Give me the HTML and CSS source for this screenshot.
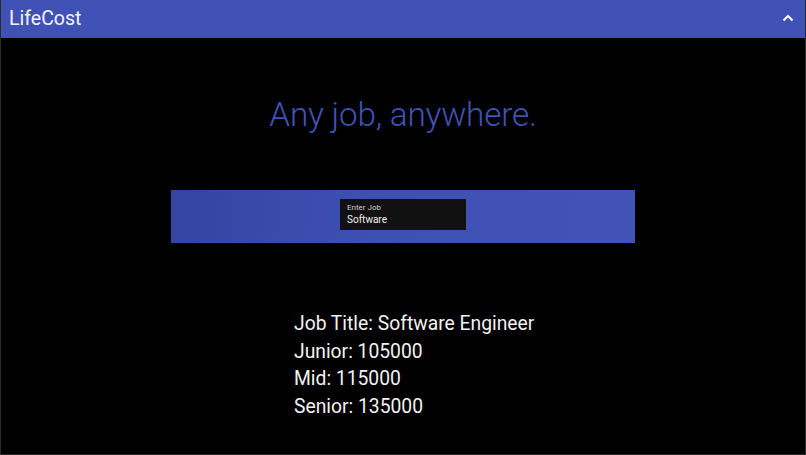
FILE: index.html
```html
<!DOCTYPE html>
<html>
<head>
<meta charset="utf-8">
<link rel="stylesheet" href="styles.css">
</head>
<body>
<div class="app">
  <header class="topbar">
    <span class="brand">LifeCost</span>
    <svg class="chev" width="12" height="8" viewBox="0 0 12 8"><path d="M1.5 6.5 L6 2 L10.5 6.5" fill="none" stroke="#fff" stroke-width="2"/></svg>
  </header>
  <main class="content">
    <h1 class="hero">Any job, anywhere.</h1>
    <section class="band">
      <div class="field">
        <span class="field-label">Enter Job</span>
        <span class="field-value">Software</span>
      </div>
    </section>
    <section class="results">
      <p>Job Title: Software Engineer</p>
      <p>Junior: 105000</p>
      <p>Mid: 115000</p>
      <p>Senior: 135000</p>
    </section>
  </main>
</div>
</body>
</html>
```
FILE: styles.css
```css
html, body {
  margin: 0;
  padding: 0;
  background: #000;
  height: 100%;
}
body {
  font-family: Roboto, "Liberation Sans", sans-serif;
}
.app {
  box-sizing: border-box;
  height: 455px;
  border: 1px solid #2a2a2a;
  border-top: none;
  display: flex;
  flex-direction: column;
}
.topbar {
  height: 38px;
  flex: none;
  background: #3f51b5;
  display: flex;
  align-items: center;
  justify-content: space-between;
  padding: 0 11px 0 8px;
}
.brand {
  color: #f4f4f8;
  font-size: 19.5px;
  line-height: 1;
}
.chev {
  display: block;
  margin-top: -2px;
}
.content {
  display: flex;
  flex-direction: column;
  align-items: center;
}
.hero {
  margin: 57px 0 0;
  font-weight: 300;
  font-size: 33.3px;
  line-height: 40px;
  color: #4052b5;
  letter-spacing: -0.2px;
}
.band {
  margin-top: 55px;
  width: 464px;
  height: 53px;
  box-sizing: border-box;
  padding-top: 9px;
  background: linear-gradient(100deg, #3444a2 0%, #3e50b3 45%, #4154b6 100%);
  display: flex;
  justify-content: center;
  align-items: flex-start;
}
.field {
  width: 126px;
  height: 31px;
  box-sizing: border-box;
  background: #111;
  padding: 4px 7px 0;
  display: flex;
  flex-direction: column;
}
.field-label {
  font-size: 8px;
  line-height: 10px;
  color: #cfcfcf;
}
.field-value {
  font-size: 10px;
  line-height: 14px;
  color: #f0f0f0;
}
.results {
  align-self: flex-start;
  margin: 67px 0 0 293px;
  color: #f2f2f2;
  font-size: 19.3px;
}
.results p {
  margin: 0;
  line-height: 27.6px;
}
```
